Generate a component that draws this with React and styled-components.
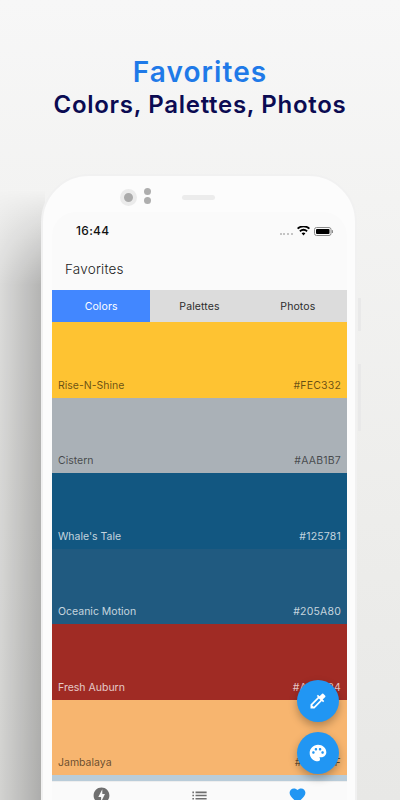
import React from "react";
import styled, { createGlobalStyle } from "styled-components";
import { MdOfflineBolt, MdList, MdFavorite, MdColorize, MdPalette } from "react-icons/md";

const Global = createGlobalStyle`
  html, body { margin: 0; padding: 0; }
  body { font-family: "Inter", "Liberation Sans", sans-serif; }
`;

const Page = styled.div`
  position: relative;
  width: 400px;
  height: 800px;
  overflow: hidden;
  background: linear-gradient(180deg, #f7f7f7 0%, #f3f3f2 25%, #ededeb 65%, #e8e8e6 100%);
  display: flex;
  flex-direction: column;
  align-items: center;
`;

// dark falloff left of the phone, behind it
const SideShadow = styled.div`
  position: absolute;
  left: 0;
  top: 165px;
  bottom: 0;
  width: 45px;
  background: linear-gradient(90deg, rgba(0, 0, 0, 0.09) 0%, rgba(0, 0, 0, 0.25) 90%);
  mask-image: linear-gradient(180deg, transparent 25px, #000 120px);
`;

const Header = styled.header`
  padding-top: 54px;
  height: 120px;
  text-align: center;
  flex-shrink: 0;
  position: relative;
`;

const Title = styled.h1`
  margin: 0;
  font-family: "Inter", sans-serif;
  font-size: 28px;
  line-height: 36px;
  font-weight: 600;
  letter-spacing: 1.1px;
  color: #1f7ae8;
`;

const Subtitle = styled.h2`
  margin: 0;
  font-family: "Inter", sans-serif;
  font-size: 24px;
  line-height: 30px;
  font-weight: 600;
  letter-spacing: 0.7px;
  color: #0b0b52;
`;

const Phone = styled.div`
  position: relative;
  flex-shrink: 0;
  width: 316px;
  height: 700px;
  box-sizing: border-box;
  border: 2px solid #f1f1f1;
  border-radius: 48px;
  background: #fcfcfc;
  padding: 36px 9px 0;
  align-self: flex-start;
  margin-left: 41px;
`;

const SideButton = styled.span`
  position: absolute;
  right: -6px;
  top: ${(p) => p.$top}px;
  width: 3px;
  height: ${(p) => p.$height}px;
  background: #e9e9e9;
`;

const Sensors = styled.div`
  position: relative;
  height: 0;
`;

const Camera = styled.span`
  position: absolute;
  left: 68px;
  top: -23px;
  width: 9px;
  height: 9px;
  border: 4px solid #ebebeb;
  border-radius: 50%;
  background: #ababab;
`;

const Dot = styled.span`
  position: absolute;
  left: 92px;
  top: ${(p) => p.$top}px;
  width: 7px;
  height: 7px;
  border-radius: 50%;
  background: #aeaeae;
`;

const Speaker = styled.span`
  position: absolute;
  left: 130px;
  top: -17px;
  width: 33px;
  height: 5px;
  border-radius: 3px;
  background: #ececec;
`;

const Screen = styled.div`
  width: 295px;
  height: 660px;
  border-radius: 24px 24px 0 0;
  background: #fafafa;
  overflow: hidden;
  position: relative;
`;

const StatusBar = styled.div`
  height: 27px;
  display: flex;
  align-items: flex-end;
  justify-content: space-between;
  padding: 0 14px 0 24px;
  box-sizing: border-box;
`;

const Time = styled.span`
  font-size: 12px;
  font-weight: 500;
  line-height: 16px;
  letter-spacing: 0.3px;
  color: #111;
`;

const StatusIcons = styled.div`
  display: flex;
  align-items: center;
  gap: 4px;
  height: 16px;
`;

const Signal = styled.span`
  width: 13px;
  border-top: 2px dotted #c4c4c4;
  margin-top: 5px;
`;

const AppBar = styled.div`
  height: 40px;
  margin-top: 10px;
  margin-bottom: 1px;
  padding-left: 13px;
  display: flex;
  align-items: center;
  font-size: 13.5px;
  font-weight: 300;
  letter-spacing: 0.2px;
  color: #222;
`;

const Tabs = styled.div`
  display: grid;
  grid-template-columns: repeat(3, 1fr);
  height: 32px;
  background: #dcdcdc;
`;

const Tab = styled.div`
  display: flex;
  align-items: center;
  justify-content: center;
  font-size: 10.5px;
  letter-spacing: 0.1px;
  color: ${(p) => (p.$active ? "#ffffff" : "#2c2c2c")};
  background: ${(p) => (p.$active ? "#4287ff" : "transparent")};
`;

const Swatch = styled.div`
  height: 75.5px;
  box-sizing: border-box;
  padding: 0 6px 6px;
  display: flex;
  align-items: flex-end;
  justify-content: space-between;
  font-size: 10.5px;
  line-height: 13px;
  background: ${(p) => p.$bg};
  color: ${(p) => (p.$dark ? "rgba(255,255,255,0.75)" : "rgba(0,0,0,0.6)")};
`;

const SwatchName = styled.span`
  letter-spacing: 0;
`;

const SwatchHex = styled.span`
  letter-spacing: 0.2px;
`;

const LastSwatch = styled.div`
  height: 6px;
  background: #b9ccd9;
`;

const BottomNav = styled.nav`
  display: grid;
  grid-template-columns: repeat(3, 1fr);
  height: 40px;
  background: #fafafa;
  border-top: 1px solid #eeeeee;
  padding-top: 4px;
  box-sizing: border-box;
  justify-items: center;
`;

const NavIcon = styled.span`
  font-size: 19px;
  line-height: 0;
  color: ${(p) => (p.$active ? "#2196f3" : "#6f6f6f")};
`;

const Fab = styled.button`
  position: absolute;
  right: 8px;
  top: ${(p) => p.$top}px;
  width: 42px;
  height: 42px;
  padding: 0;
  border: 0;
  border-radius: 50%;
  background: #2196f3;
  color: #fff;
  display: flex;
  align-items: center;
  justify-content: center;
  font-size: 20px;
  box-shadow: 0 4px 8px rgba(0, 0, 0, 0.28);
`;

const swatches = [
  { name: "Rise-N-Shine", hex: "#FEC332", bg: "#fec332" },
  { name: "Cistern", hex: "#AAB1B7", bg: "#aab1b7" },
  { name: "Whale's Tale", hex: "#125781", bg: "#125781", dark: true },
  { name: "Oceanic Motion", hex: "#205A80", bg: "#205a80", dark: true },
  { name: "Fresh Auburn", hex: "#A02B24", bg: "#a02b24", dark: true },
  { name: "Jambalaya", hex: "#F7B56F", bg: "#f7b56f" },
];

export default function App() {
  return (
    <Page>
      <Global />
      <SideShadow />
      <Header>
        <Title>Favorites</Title>
        <Subtitle>Colors, Palettes, Photos</Subtitle>
      </Header>
      <Phone>
        <SideButton $top={122} $height={33} />
        <SideButton $top={188} $height={67} />
        <Sensors>
          <Camera />
          <Dot $top={-24} />
          <Dot $top={-15} />
          <Speaker />
        </Sensors>
        <Screen>
          <StatusBar>
            <Time>16:44</Time>
            <StatusIcons>
              <Signal />
              <svg width="13" height="10" viewBox="0 0 13 10">
                <path d="M6.5 9.6 4.6 7.3a3 3 0 0 1 3.8 0zM3.4 5.9 2.3 4.6a6.6 6.6 0 0 1 8.4 0L9.6 5.9a4.9 4.9 0 0 0-6.2 0zM1.2 3.3 0 1.9a10 10 0 0 1 13 0l-1.2 1.4a8.2 8.2 0 0 0-10.6 0z" fill="#000" />
              </svg>
              <svg width="19" height="9" viewBox="0 0 19 9">
                <rect x="0.5" y="0.5" width="16.5" height="8" rx="2" fill="none" stroke="#8a8a8a" />
                <rect x="2" y="2" width="13.5" height="5" rx="1" fill="#000" />
                <rect x="17.8" y="3" width="1.2" height="3" rx="0.6" fill="#8a8a8a" />
              </svg>
            </StatusIcons>
          </StatusBar>
          <AppBar>Favorites</AppBar>
          <Tabs>
            <Tab $active>Colors</Tab>
            <Tab>Palettes</Tab>
            <Tab>Photos</Tab>
          </Tabs>
          {swatches.map((s) => (
            <Swatch key={s.name} $bg={s.bg} $dark={s.dark}>
              <SwatchName>{s.name}</SwatchName>
              <SwatchHex>{s.hex}</SwatchHex>
            </Swatch>
          ))}
          <LastSwatch />
          <BottomNav>
            <NavIcon><MdOfflineBolt /></NavIcon>
            <NavIcon><MdList /></NavIcon>
            <NavIcon $active><MdFavorite /></NavIcon>
          </BottomNav>
          <Fab $top={468}><MdColorize /></Fab>
          <Fab $top={520}><MdPalette /></Fab>
        </Screen>
      </Phone>
    </Page>
  );
}
